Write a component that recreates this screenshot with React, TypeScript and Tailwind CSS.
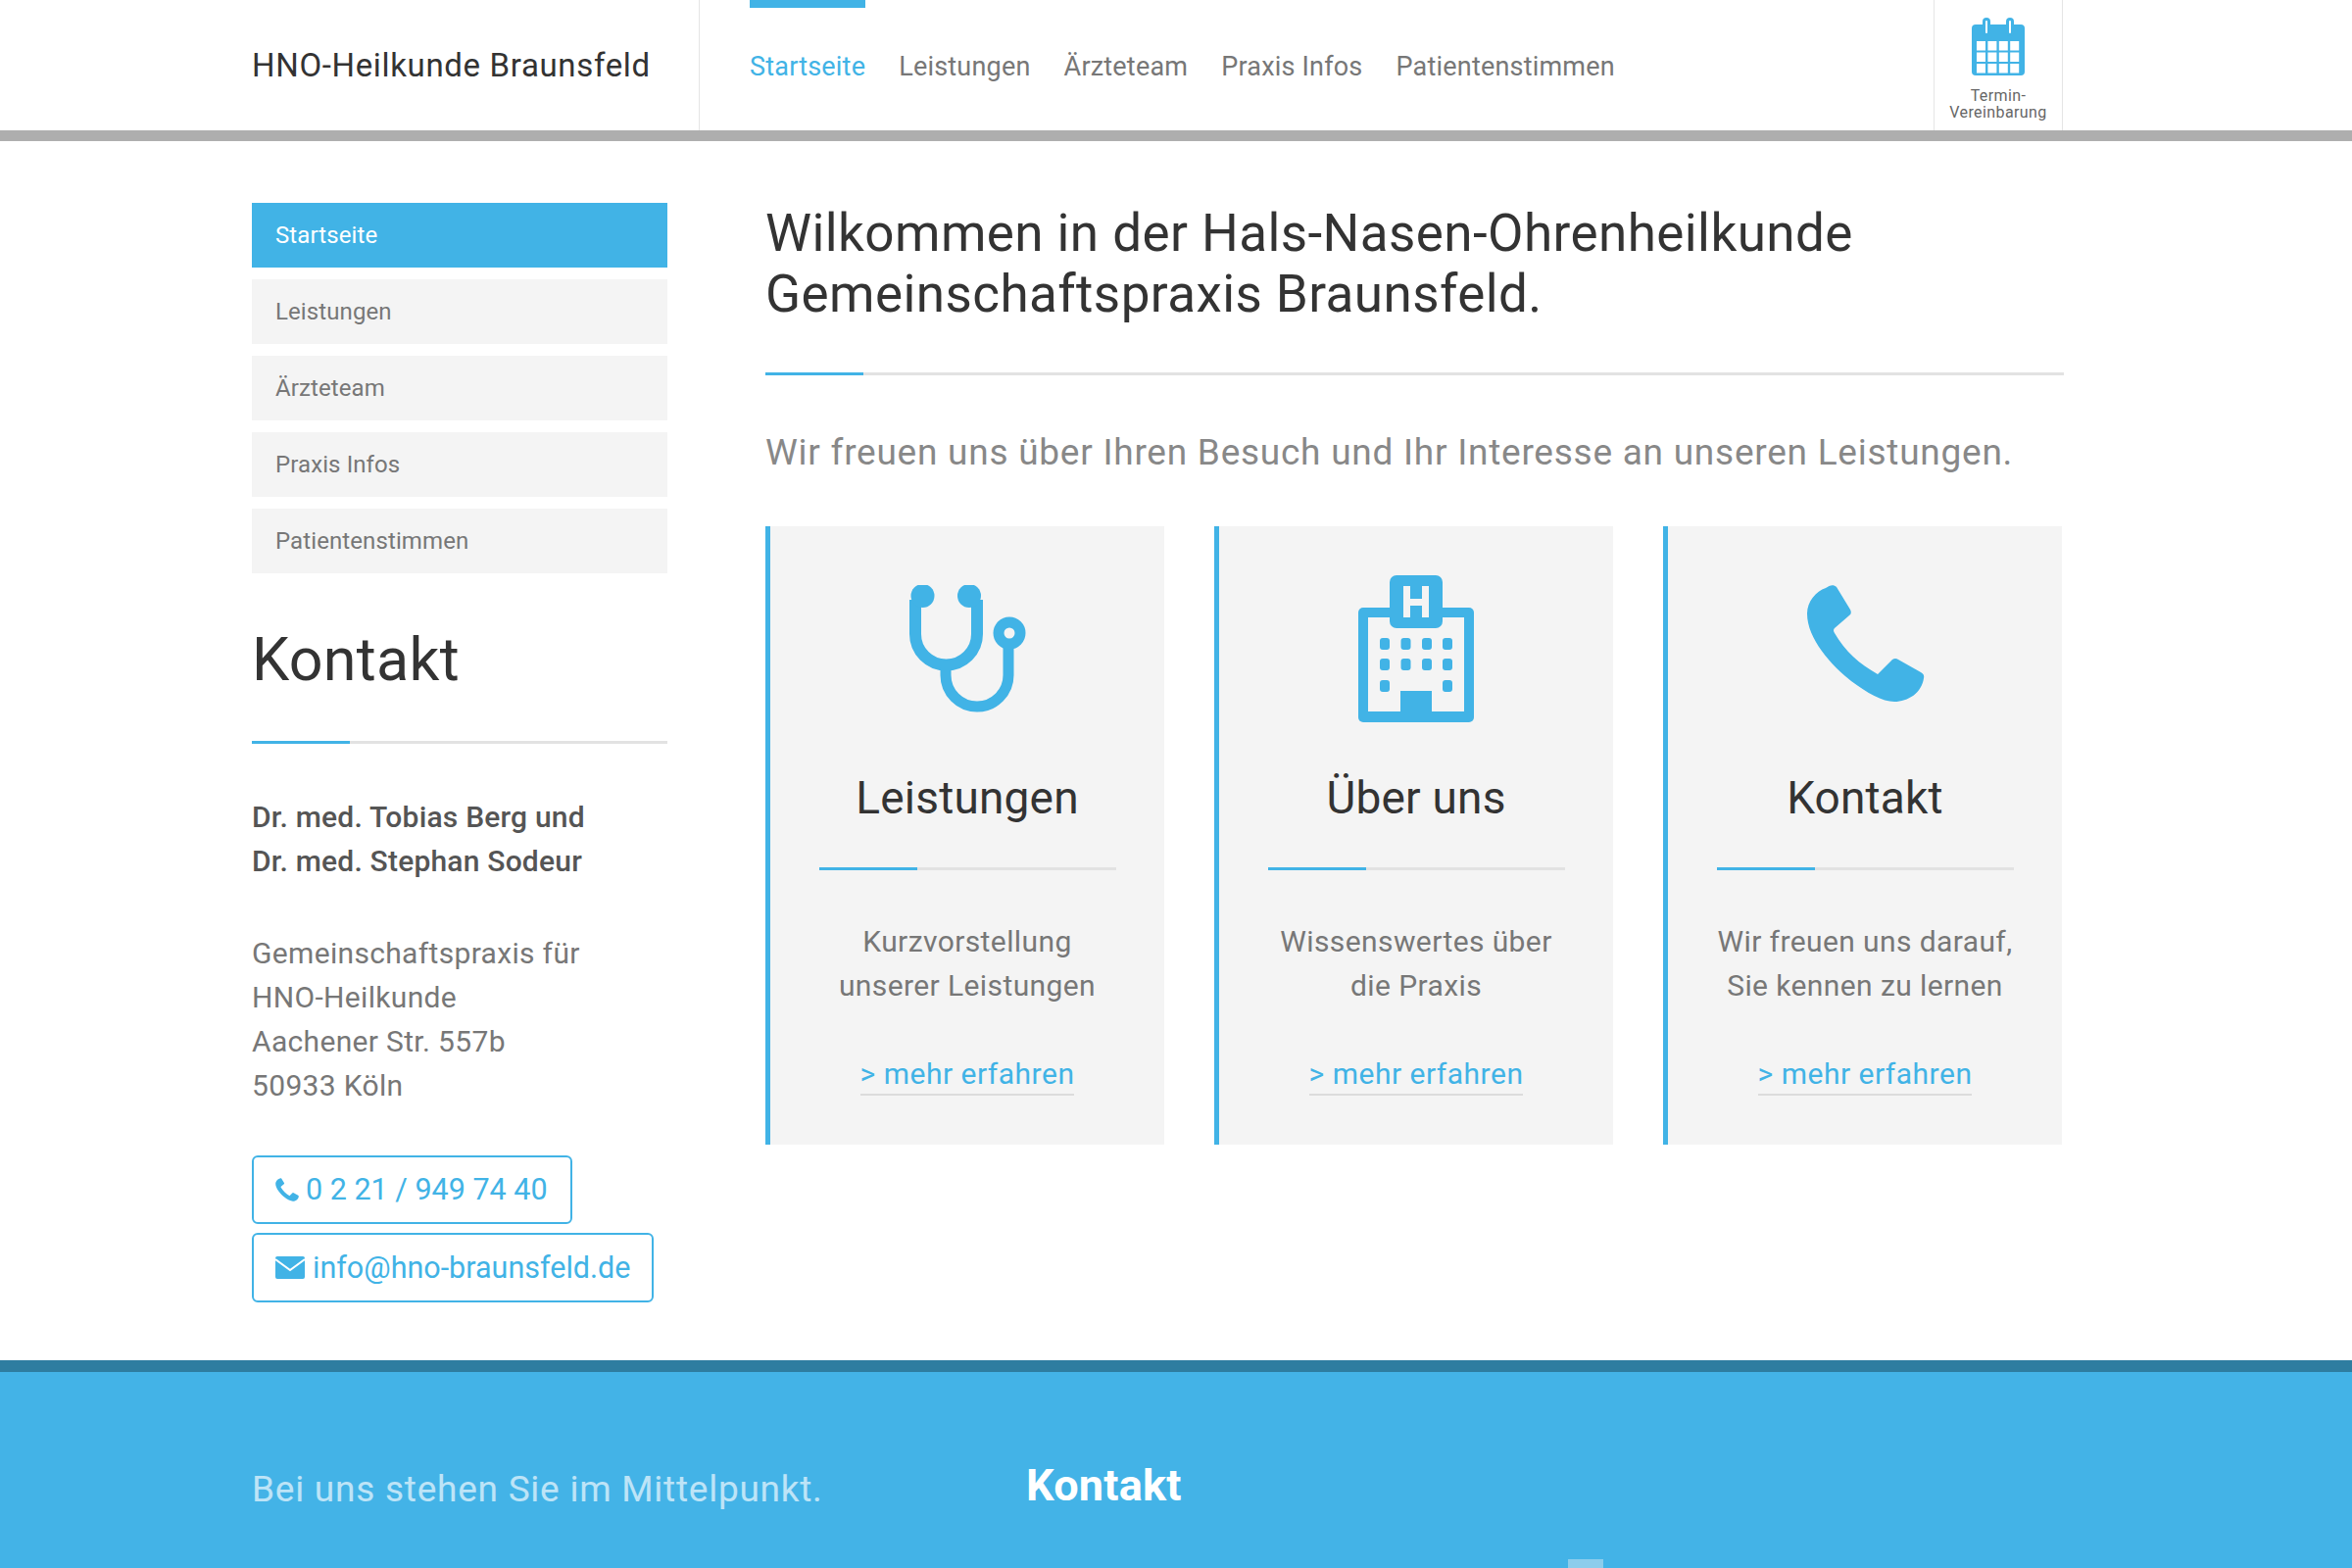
import React from 'react';

const navItems = ['Startseite', 'Leistungen', 'Ärzteteam', 'Praxis Infos', 'Patientenstimmen'];

const PhoneIcon = ({ className }: { className: string }) => (
  <svg viewBox="0 0 121 120" className={className} fill="currentColor">
    <path d="M20 3C24 0 28-1 31 2L45 25Q47 29 44 31L29 44Q27 46 29 49C40 68 54 80 73 91L88 76Q91 74 94 76L117 89Q121 91 120 95C118 110 104 119 90 119C78 119 62 110 46 98C26 82 1 55 1 29C1 17 10 6 20 3Z" />
  </svg>
);

const MailIcon = () => (
  <svg viewBox="0 0 30 23" className="h-[23px] w-[30px] shrink-0">
    <rect width="30" height="23" rx="2" fill="#41b3e6" />
    <path d="M0 3L15 14L30 3" fill="none" stroke="#fff" strokeWidth="2" />
  </svg>
);

const CalendarIcon = () => {
  const cells = [];
  for (let row = 0; row < 3; row++) {
    for (let col = 0; col < 4; col++) {
      cells.push(<rect key={`${row}-${col}`} x={5 + col * 11.4} y={24 + row * 11.5} width="9" height="9.5" fill="#fff" />);
    }
  }
  return (
    <svg viewBox="0 0 54 59" className="h-[59px] w-[54px]">
      <rect y="7" width="54" height="52" rx="4" fill="#41b3e6" />
      <rect x="11" y="0" width="8" height="19" rx="4" fill="#41b3e6" />
      <rect x="35" y="0" width="8" height="19" rx="4" fill="#41b3e6" />
      <rect x="14" y="3" width="2" height="13" rx="1" fill="#fff" />
      <rect x="38" y="3" width="2" height="13" rx="1" fill="#fff" />
      {cells}
    </svg>
  );
};

const StethoscopeIcon = () => (
  <svg viewBox="0 0 120 131" className="h-[131px] w-[120px]" fill="none" stroke="#41b3e6">
    <path d="M7 15V50a31.5 31.5 0 0 0 63 0V15" strokeWidth="12" />
    <path d="M38 84V92a32 32 0 0 0 64 0V60" strokeWidth="11" />
    <circle cx="103" cy="49" r="11" strokeWidth="11" />
    <circle cx="14.5" cy="11" r="12" fill="#41b3e6" stroke="none" />
    <circle cx="62" cy="11" r="12" fill="#41b3e6" stroke="none" />
  </svg>
);

const HospitalIcon = () => {
  const windows = [
    [27, 70], [48.5, 70], [70, 70], [91, 70],
    [27, 91], [48.5, 91], [70, 91], [91, 91],
    [27, 113], [91, 113],
  ];
  return (
    <svg viewBox="0 0 118 150" className="h-[150px] w-[118px]">
      <rect y="33" width="118" height="117" rx="5" fill="#41b3e6" />
      <rect x="10" y="43" width="98" height="96" fill="#f4f4f4" />
      <rect x="32" y="0" width="54" height="54" rx="7" fill="#41b3e6" />
      <path d="M46 11H53V24H65V11H72V43H65V31H53V43H46Z" fill="#f4f4f4" />
      {windows.map(([x, y]) => (
        <rect key={`${x}-${y}`} x={x - 5} y={y - 6} width="10" height="12" rx="3" fill="#41b3e6" />
      ))}
      <rect x="43" y="118" width="32" height="22" fill="#41b3e6" />
    </svg>
  );
};

const Divider = ({ className }: { className: string }) => (
  <div className={`relative h-[3px] bg-[#e2e2e2] ${className}`}>
    <div className="h-[3px] w-[100px] bg-[#41b3e6]" />
  </div>
);

const cards = [
  { title: 'Leistungen', lines: ['Kurzvorstellung', 'unserer Leistungen'], icon: <StethoscopeIcon />, iconBox: 'pt-[60px]' },
  { title: 'Über uns', lines: ['Wissenswertes über', 'die Praxis'], icon: <HospitalIcon />, iconBox: 'pt-[50px]' },
  { title: 'Kontakt', lines: ['Wir freuen uns darauf,', 'Sie kennen zu lernen'], icon: <PhoneIcon className="h-[120px] w-[121px] text-[#41b3e6]" />, iconBox: 'pt-[60px]' },
];

const App = () => {
  return (
    <div className="flex h-[1600px] flex-col overflow-hidden bg-white font-['Roboto',sans-serif]">
      <header className="flex h-[133px] shrink-0 pl-[257px]">
        <div className="flex w-[457px] items-center border-r border-[#e5e5e5] text-[33px] tracking-[0.65px] text-[#333]">
          HNO-Heilkunde Braunsfeld
        </div>
        <nav className="ml-[51px] flex w-[1208px] gap-[34px] text-[27px] tracking-[0.2px] text-[#777]">
          {navItems.map((item, index) => (
            <a key={item} className={index === 0 ? 'flex h-[133px] items-center border-t-[8px] border-[#41b3e6] pb-[5px] text-[#41b3e6]' : 'flex h-[133px] items-center pt-[3px]'}>
              {item}
            </a>
          ))}
        </nav>
        <div className="flex w-[132px] flex-col items-center border-x border-[#e5e5e5] pt-[18px]">
          <CalendarIcon />
          <div className="mt-[12px] text-center text-[16px] leading-[17px] tracking-[0.4px] text-[#666]">
            Termin-<br />Vereinbarung
          </div>
        </div>
      </header>
      <div className="h-[11px] shrink-0 bg-[#aeaeae]" />

      <main className="ml-[257px] flex h-[1244px] shrink-0 pt-[63px]">
        <aside className="w-[424px]">
          <ul className="flex flex-col gap-[12px] text-[24px] tracking-[0.1px]">
            {navItems.map((item, index) => (
              <li key={item} className={index === 0 ? 'flex h-[66px] items-center bg-[#41b3e6] pl-[24px] text-white' : 'flex h-[66px] items-center bg-[#f4f4f4] pl-[24px] text-[#777]'}>
                {item}
              </li>
            ))}
          </ul>
          <h2 className="mt-[53px] text-[61px] leading-[70px] tracking-[0.3px] text-[#333]">Kontakt</h2>
          <Divider className="mt-[48px] w-full" />
          <p className="mt-[52px] text-[30px] leading-[45px] font-medium tracking-[0.2px] text-[#555]">
            Dr. med. Tobias Berg und<br />Dr. med. Stephan Sodeur
          </p>
          <p className="mt-[49px] text-[30px] leading-[45px] tracking-[0.33px] text-[#777]">
            Gemeinschaftspraxis für<br />HNO-Heilkunde<br />Aachener Str. 557b<br />50933 Köln
          </p>
          <div className="mt-[49px] flex flex-col items-start gap-[9px] text-[30.5px] text-[#41b3e6]">
            <a className="flex h-[70px] items-center gap-[7px] rounded-[6px] border-2 border-[#41b3e6] pr-[23px] pl-[22px]">
              <PhoneIcon className="h-[24px] w-[24px] shrink-0" />
              0 2 21 / 949 74 40
            </a>
            <a className="flex h-[71px] items-center gap-[8px] rounded-[6px] border-2 border-[#41b3e6] pr-[22px] pl-[22px]">
              <MailIcon />
              info@hno-braunsfeld.de
            </a>
          </div>
        </aside>

        <section className="ml-[100px] w-[1325px]">
          <h1 className="text-[53px] leading-[62px] tracking-[0.42px] text-[#333]">
            Wilkommen in der Hals-Nasen-Ohrenheilkunde<br />Gemeinschaftspraxis Braunsfeld.
          </h1>
          <Divider className="mt-[49px] w-full" />
          <p className="mt-[57px] text-[37px] leading-[44px] tracking-[0.75px] text-[#888]">
            Wir freuen uns über Ihren Besuch und Ihr Interesse an unseren Leistungen.
          </p>
          <div className="mt-[53px] flex w-[1323px] justify-between">
            {cards.map((card) => (
              <div key={card.title} className="flex h-[631px] w-[407px] flex-col items-center border-l-[5px] border-[#41b3e6] bg-[#f4f4f4]">
                <div className={`h-[243px] ${card.iconBox}`}>{card.icon}</div>
                <h3 className="text-[46px] leading-[68px] tracking-[0.2px] text-[#333]">{card.title}</h3>
                <Divider className="mt-[37px] w-[303px]" />
                <p className="mt-[50px] text-center text-[30px] leading-[45px] tracking-[0.4px] text-[#777]">
                  {card.lines[0]}<br />{card.lines[1]}
                </p>
                <a className="mt-[48px] border-b-2 border-[#dcdcdc] text-[30px] leading-[40px] tracking-[0.5px] text-[#41b3e6]">&gt; mehr erfahren</a>
              </div>
            ))}
          </div>
        </section>
      </main>

      <footer className="relative flex-1 border-t-[12px] border-[#2e7da0] bg-[#43b3e7] pl-[257px]">
        <div className="flex pt-[90px]">
          <p className="w-[790px] pt-[8px] text-[37px] leading-[44px] tracking-[0.75px] text-white/65">Bei uns stehen Sie im Mittelpunkt.</p>
          <h4 className="text-[45px] leading-[52px] font-bold tracking-[0.2px] text-white">Kontakt</h4>
        </div>
        <div className="absolute top-[191px] left-[1600px] h-[10px] w-[36px] bg-[#8ccdec]" />
      </footer>
    </div>
  );
};

export default App;
